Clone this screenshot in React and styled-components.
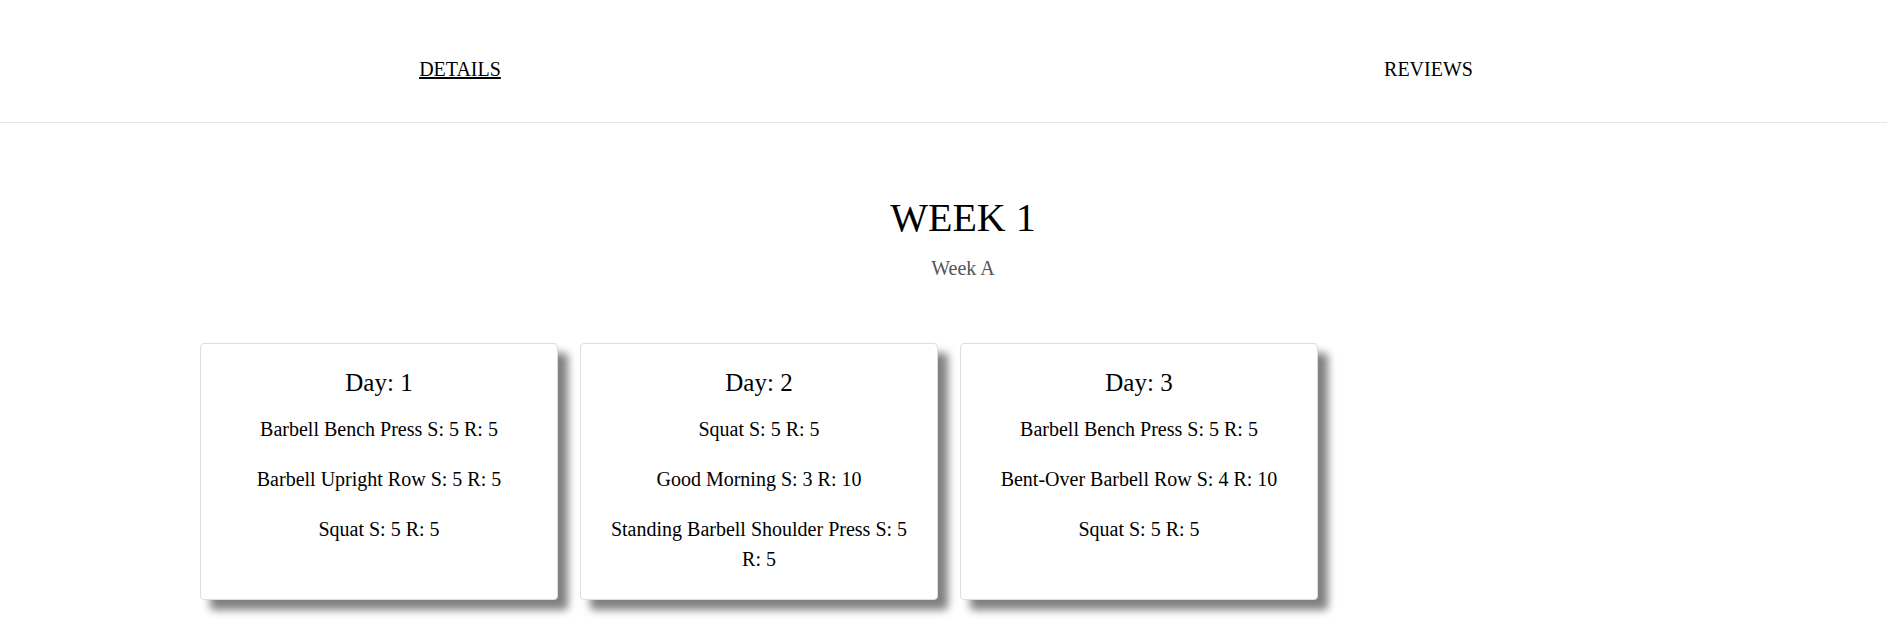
import React, { useState } from "react";
import styled, { createGlobalStyle } from "styled-components";

const GlobalStyle = createGlobalStyle`
  body {
    margin: 0;
    background: #fff;
    font-family: "Liberation Serif", "Times New Roman", serif;
    color: #000;
  }
`;

const week = {
  title: "WEEK 1",
  subtitle: "Week A",
  days: [
    {
      day: 1,
      exercises: [
        { name: "Barbell Bench Press", sets: 5, reps: 5 },
        { name: "Barbell Upright Row", sets: 5, reps: 5 },
        { name: "Squat", sets: 5, reps: 5 },
      ],
    },
    {
      day: 2,
      exercises: [
        { name: "Squat", sets: 5, reps: 5 },
        { name: "Good Morning", sets: 3, reps: 10 },
        { name: "Standing Barbell Shoulder Press", sets: 5, reps: 5 },
      ],
    },
    {
      day: 3,
      exercises: [
        { name: "Barbell Bench Press", sets: 5, reps: 5 },
        { name: "Bent-Over Barbell Row", sets: 4, reps: 10 },
        { name: "Squat", sets: 5, reps: 5 },
      ],
    },
  ],
};

export default function App() {
  const [tab, setTab] = useState("details");

  return (
    <>
      <GlobalStyle />
      <TabBar>
        <Tab active={tab === "details"} onClick={() => setTab("details")}>
          DETAILS
        </Tab>
        <Tab active={tab === "reviews"} onClick={() => setTab("reviews")}>
          REVIEWS
        </Tab>
      </TabBar>
      <Section>
        <WeekTitle>{week.title}</WeekTitle>
        <WeekSubtitle>{week.subtitle}</WeekSubtitle>
        <DayGrid>
          {week.days.map((d) => (
            <DayCard key={d.day}>
              <DayTitle>Day: {d.day}</DayTitle>
              {d.exercises.map((ex, i) => (
                <Exercise key={i}>
                  {ex.name} S: {ex.sets} R: {ex.reps}
                </Exercise>
              ))}
            </DayCard>
          ))}
        </DayGrid>
      </Section>
    </>
  );
}

const TabBar = styled.nav`
  display: grid;
  grid-template-columns: 920px 1fr;
  column-gap: 50px;
  height: 123px;
  box-sizing: border-box;
  padding-top: 58px;
  border-bottom: 1px solid #e6e6e6;
`;

const Tab = styled.span`
  justify-self: center;
  align-self: start;
  font-size: 20px;
  line-height: 23px;
  cursor: pointer;
  text-decoration: ${(props) => (props.active ? "underline" : "none")};
`;

const Section = styled.main`
  padding: 0 161px 26px 200px;
  display: flex;
  flex-direction: column;
  align-items: center;
`;

const WeekTitle = styled.h1`
  margin: 72px 0 0;
  font-size: 40px;
  line-height: 46px;
  font-weight: normal;
`;

const WeekSubtitle = styled.p`
  margin: 16px 0 0;
  font-size: 20px;
  line-height: 23px;
  color: #555;
`;

const DayGrid = styled.div`
  align-self: stretch;
  display: grid;
  grid-template-columns: repeat(auto-fill, 358px);
  column-gap: 22px;
  margin-top: 63px;
`;

const DayCard = styled.div`
  box-sizing: border-box;
  border: 1px solid #ddd;
  border-radius: 4px;
  background: #fff;
  padding: 0 20px 5px;
  text-align: center;
  box-shadow: 10px 10px 8px #808080;
`;

const DayTitle = styled.h2`
  margin: 21px 0 13px;
  font-size: 25px;
  line-height: 36px;
  font-weight: normal;
`;

const Exercise = styled.p`
  margin: 0 0 20px;
  font-size: 20px;
  line-height: 30px;
`;
